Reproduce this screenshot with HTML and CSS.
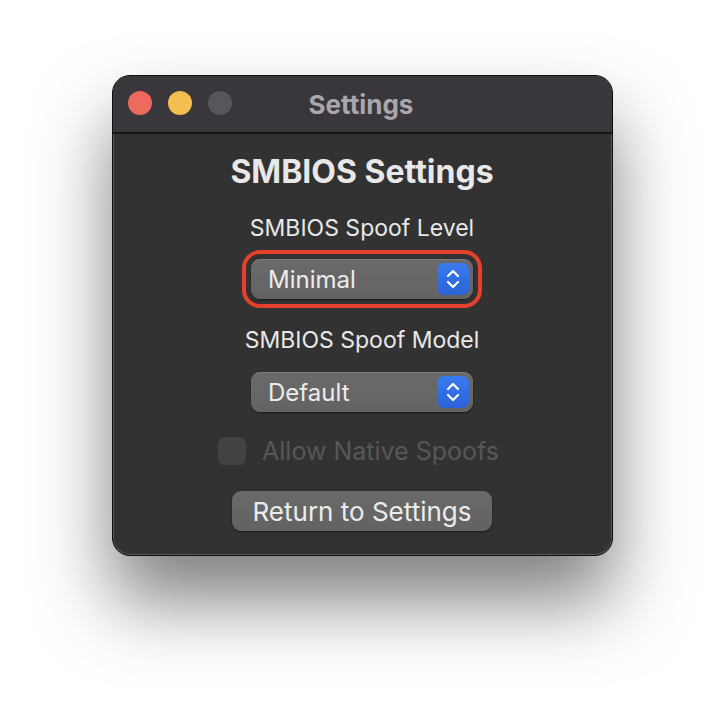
FILE: index.html
```html
<!DOCTYPE html>
<html lang="en">
  <head>
    <meta charset="UTF-8" />
    <meta name="viewport" content="width=device-width, initial-scale=1.0" />
    <title>Settings</title>
    <link rel="stylesheet" href="styles.css">
  </head>

  <body>
    <div class="stage">
      <div class="window">
        <div class="titlebar">
          <div class="lights">
            <span class="light red"></span>
            <span class="light yellow"></span>
            <span class="light gray"></span>
          </div>
          <div class="title">Settings</div>
        </div>

        <main class="content">
          <h2 class="heading">SMBIOS Settings</h2>

          <p class="label level">SMBIOS Spoof Level</p>
          <div class="focus-ring">
            <div class="popup">
              <span>Minimal</span>
              <span class="stepper">
                <svg width="16" height="22" viewBox="0 0 16 22">
                  <path d="M3 8 L8 3 L13 8 M3 14 L8 19 L13 14" fill="none" stroke="#fff" stroke-width="2.2" stroke-linecap="round" stroke-linejoin="round" />
                </svg>
              </span>
            </div>
          </div>

          <p class="label model">SMBIOS Spoof Model</p>
          <div class="popup">
            <span>Default</span>
            <span class="stepper">
              <svg width="16" height="22" viewBox="0 0 16 22">
                <path d="M3 8 L8 3 L13 8 M3 14 L8 19 L13 14" fill="none" stroke="#fff" stroke-width="2.2" stroke-linecap="round" stroke-linejoin="round" />
              </svg>
            </span>
          </div>

          <label class="checkbox">
            <span class="box"></span>
            <span>Allow Native Spoofs</span>
          </label>

          <button class="button">Return to Settings</button>
        </main>
      </div>
    </div>
  </body>
</html>
```

FILE: styles.css
```css
body {
  margin: 0;
  background-color: #ffffff;
  font-family: Inter, "Liberation Sans", sans-serif;
}

.stage {
  min-height: 704px;
  padding-top: 75px;
  box-sizing: border-box;
}

.window {
  width: 501px;
  height: 481px;
  margin: 0 auto;
  box-sizing: border-box;
  border: 1px solid #0e0e0e;
  border-radius: 18px;
  background-color: #323232;
  overflow: hidden;
  box-shadow: inset 0 0 0 1px rgba(255, 255, 255, 0.18),
    0 45px 75px rgba(0, 0, 0, 0.5);
}

.titlebar {
  position: relative;
  height: 56px;
  background-color: #39373c;
  border-bottom: 2px solid #161616;
  display: flex;
  align-items: center;
  justify-content: center;
}

.lights {
  position: absolute;
  left: 15px;
  top: 15px;
  display: flex;
  gap: 16px;
}

.light {
  width: 24px;
  height: 24px;
  border-radius: 50%;
}

.red {
  background-color: #ee6a5e;
}

.yellow {
  background-color: #f5bf4f;
}

.gray {
  background-color: #58565b;
}

.title {
  color: #a9a7ad;
  font-size: 26px;
  font-weight: 700;
  margin-left: -2px;
}

.content {
  display: flex;
  flex-direction: column;
  align-items: center;
  color: #e8e8e8;
}

.heading {
  margin: 20px 0 0;
  font-size: 32px;
  font-weight: 700;
  line-height: 36px;
}

.label {
  margin: 0;
  font-size: 23px;
  line-height: 30px;
}

.level {
  margin-top: 23px;
}

.model {
  margin-top: 17px;
}

.focus-ring {
  margin-top: 7px;
  padding: 5px;
  border: 4px solid #e5402b;
  border-radius: 18px;
}

.popup {
  width: 222px;
  height: 40px;
  box-sizing: border-box;
  padding: 0 4px 0 17px;
  display: flex;
  align-items: center;
  justify-content: space-between;
  border-radius: 9px;
  background: linear-gradient(#6a6a6a, #636363);
  box-shadow: 0 1px 2px rgba(0, 0, 0, 0.5), inset 0 1px 0 rgba(255, 255, 255, 0.12);
  font-size: 24px;
  color: #ececec;
}

.content > .popup {
  margin-top: 17px;
}

.stepper {
  width: 32px;
  height: 32px;
  border-radius: 7px;
  background: linear-gradient(#3a7bf0, #2a62d6);
  display: flex;
  align-items: center;
  justify-content: center;
}

.checkbox {
  margin-top: 24px;
  display: flex;
  align-items: center;
  gap: 16px;
  font-size: 25px;
  color: #575757;
  margin-left: -7px;
}

.box {
  width: 28px;
  height: 28px;
  border-radius: 7px;
  background-color: #424242;
}

.button {
  margin-top: 25px;
  width: 260px;
  height: 40px;
  border: none;
  border-radius: 9px;
  background: linear-gradient(#6a6a6a, #626262);
  box-shadow: 0 1px 2px rgba(0, 0, 0, 0.5);
  color: #ececec;
  font-family: inherit;
  font-size: 26px;
}
```
